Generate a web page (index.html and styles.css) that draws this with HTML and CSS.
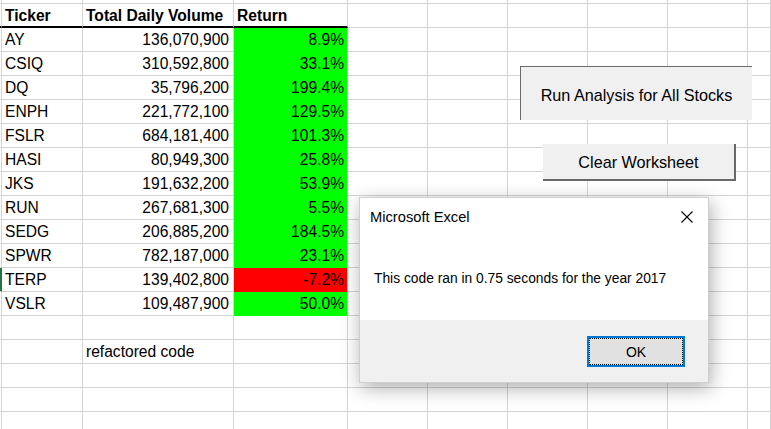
FILE: index.html
```html
<!DOCTYPE html>
<html>
<head>
<meta charset="utf-8">
<title>Excel</title>
<link rel="stylesheet" href="styles.css">
</head>
<body>
<div class="sheet">
  <div class="c p"></div><div class="c"></div><div class="c"></div><div class="c"></div><div class="c"></div><div class="c"></div><div class="c"></div><div class="c"></div><div class="c"></div><div class="c"></div>

  <div class="c p h"></div><div class="c h">Ticker</div><div class="c h">Total Daily Volume</div><div class="c h">Return</div><div class="c"></div><div class="c"></div><div class="c"></div><div class="c"></div><div class="c"></div><div class="c"></div>

  <div class="c p"></div><div class="c">AY</div><div class="c nb">136,070,900</div><div class="c nc g">8.9%</div><div class="c"></div><div class="c"></div><div class="c"></div><div class="c"></div><div class="c"></div><div class="c"></div>
  <div class="c p"></div><div class="c">CSIQ</div><div class="c nb">310,592,800</div><div class="c nc g">33.1%</div><div class="c"></div><div class="c"></div><div class="c"></div><div class="c"></div><div class="c"></div><div class="c"></div>
  <div class="c p"></div><div class="c">DQ</div><div class="c nb">35,796,200</div><div class="c nc g">199.4%</div><div class="c"></div><div class="c"></div><div class="c"></div><div class="c"></div><div class="c"></div><div class="c"></div>
  <div class="c p"></div><div class="c">ENPH</div><div class="c nb">221,772,100</div><div class="c nc g">129.5%</div><div class="c"></div><div class="c"></div><div class="c"></div><div class="c"></div><div class="c"></div><div class="c"></div>
  <div class="c p"></div><div class="c">FSLR</div><div class="c nb">684,181,400</div><div class="c nc g">101.3%</div><div class="c"></div><div class="c"></div><div class="c"></div><div class="c"></div><div class="c"></div><div class="c"></div>
  <div class="c p"></div><div class="c">HASI</div><div class="c nb">80,949,300</div><div class="c nc g">25.8%</div><div class="c"></div><div class="c"></div><div class="c"></div><div class="c"></div><div class="c"></div><div class="c"></div>
  <div class="c p"></div><div class="c">JKS</div><div class="c nb">191,632,200</div><div class="c nc g">53.9%</div><div class="c"></div><div class="c"></div><div class="c"></div><div class="c"></div><div class="c"></div><div class="c"></div>
  <div class="c p"></div><div class="c">RUN</div><div class="c nb">267,681,300</div><div class="c nc g">5.5%</div><div class="c"></div><div class="c"></div><div class="c"></div><div class="c"></div><div class="c"></div><div class="c"></div>
  <div class="c p"></div><div class="c">SEDG</div><div class="c nb">206,885,200</div><div class="c nc g">184.5%</div><div class="c"></div><div class="c"></div><div class="c"></div><div class="c"></div><div class="c"></div><div class="c"></div>
  <div class="c p"></div><div class="c">SPWR</div><div class="c nb">782,187,000</div><div class="c nc g">23.1%</div><div class="c"></div><div class="c"></div><div class="c"></div><div class="c"></div><div class="c"></div><div class="c"></div>
  <div class="c p sel"></div><div class="c">TERP</div><div class="c nb">139,402,800</div><div class="c nc r">-7.2%</div><div class="c"></div><div class="c"></div><div class="c"></div><div class="c"></div><div class="c"></div><div class="c"></div>
  <div class="c p"></div><div class="c">VSLR</div><div class="c nb">109,487,900</div><div class="c nc g">50.0%</div><div class="c"></div><div class="c"></div><div class="c"></div><div class="c"></div><div class="c"></div><div class="c"></div>

  <div class="c p"></div><div class="c"></div><div class="c"></div><div class="c"></div><div class="c"></div><div class="c"></div><div class="c"></div><div class="c"></div><div class="c"></div><div class="c"></div>
  <div class="c p"></div><div class="c"></div><div class="c">refactored code</div><div class="c"></div><div class="c"></div><div class="c"></div><div class="c"></div><div class="c"></div><div class="c"></div><div class="c"></div>
  <div class="c p"></div><div class="c"></div><div class="c"></div><div class="c"></div><div class="c"></div><div class="c"></div><div class="c"></div><div class="c"></div><div class="c"></div><div class="c"></div>
  <div class="c p"></div><div class="c"></div><div class="c"></div><div class="c"></div><div class="c"></div><div class="c"></div><div class="c"></div><div class="c"></div><div class="c"></div><div class="c"></div>
  <div class="c p"></div><div class="c"></div><div class="c"></div><div class="c"></div><div class="c"></div><div class="c"></div><div class="c"></div><div class="c"></div><div class="c"></div><div class="c"></div>
</div>

<div class="btn btn-run">Run Analysis for All Stocks</div>
<div class="btn btn-clear">Clear Worksheet</div>

<div class="dlg">
  <div class="dlg-title">
    <span>Microsoft Excel</span>
    <svg class="close" width="12" height="12" viewBox="0 0 12 12"><path d="M0.5 0.5 L11.5 11.5 M11.5 0.5 L0.5 11.5" stroke="#000" stroke-width="1.1" fill="none"/></svg>
  </div>
  <div class="dlg-body">This code ran in 0.75 seconds for the year 2017</div>
  <div class="dlg-foot">
    <div class="ok"><div class="ok-focus">OK</div></div>
  </div>
</div>
</body>
</html>
```

FILE: styles.css
```css
* { box-sizing: border-box; }
html, body { margin: 0; padding: 0; }
body {
  width: 771px;
  height: 429px;
  overflow: hidden;
  position: relative;
  background: #fff;
  color: #000;
  font-family: "Liberation Sans", Arial, sans-serif;
}
.sheet {
  display: grid;
  grid-template-columns: 2px 81px 151px 114px repeat(5, 80px) 1fr;
  grid-template-rows: 4px;
  grid-auto-rows: 24px;
}
.c {
  border-right: 1px solid #d4d4d4;
  border-bottom: 1px solid #d4d4d4;
  font-size: 15.6px;
  line-height: 22px;
  padding: 1px 3px 0;
  white-space: nowrap;
  overflow: hidden;
}
.p { padding: 0; }
.h {
  font-weight: bold;
  line-height: 21px;
  border-bottom: 2px solid #000;
}
.nb { text-align: right; padding-right: 4px; }
.nc { text-align: right; padding-right: 3px; }
.g { background: #00ff00; border-bottom-color: #00ff00; }
.r { background: #ff0000; border-bottom-color: #ff0000; }
.sel { background: #217346; border-right-color: #217346; }

.btn {
  position: absolute;
  background: #f0f0f0;
  display: flex;
  align-items: center;
  justify-content: center;
  font-size: 16.2px;
  white-space: nowrap;
}
.btn-run {
  left: 520px;
  top: 66px;
  width: 232px;
  height: 54px;
  border-top: 1px solid #6b6b6b;
  border-left: 1px solid #6b6b6b;
  padding-top: 4px;
}
.btn-clear {
  left: 543px;
  top: 144px;
  width: 193px;
  height: 37px;
  border-right: 2px solid #696969;
  border-bottom: 2px solid #696969;
  padding-top: 1px;
}

.dlg {
  position: absolute;
  left: 359px;
  top: 197px;
  width: 350px;
  height: 186px;
  background: #fff;
  border: 1px solid #cfcfcf;
  box-shadow: 2px 5px 18px rgba(0, 0, 0, 0.32);
  display: flex;
  flex-direction: column;
}
.dlg-title {
  height: 38px;
  display: flex;
  align-items: center;
  justify-content: space-between;
  padding: 0 15px 0 10px;
  font-size: 14.7px;
}
.close { display: block; }
.dlg-body {
  height: 84px;
  display: flex;
  align-items: center;
  padding-left: 14px;
  font-size: 13.8px;
  white-space: nowrap;
}
.dlg-foot {
  flex: 1;
  background: #f0f0f0;
  display: flex;
  justify-content: flex-end;
  align-items: flex-start;
  padding: 16px 23px 0 0;
}
.ok {
  width: 98px;
  height: 31px;
  border: 2px solid #0078d7;
  background: #e1e1e1;
}
.ok-focus {
  width: 100%;
  height: 100%;
  border: 1px dotted #000;
  display: flex;
  align-items: center;
  justify-content: center;
  font-size: 14px;
}
```
